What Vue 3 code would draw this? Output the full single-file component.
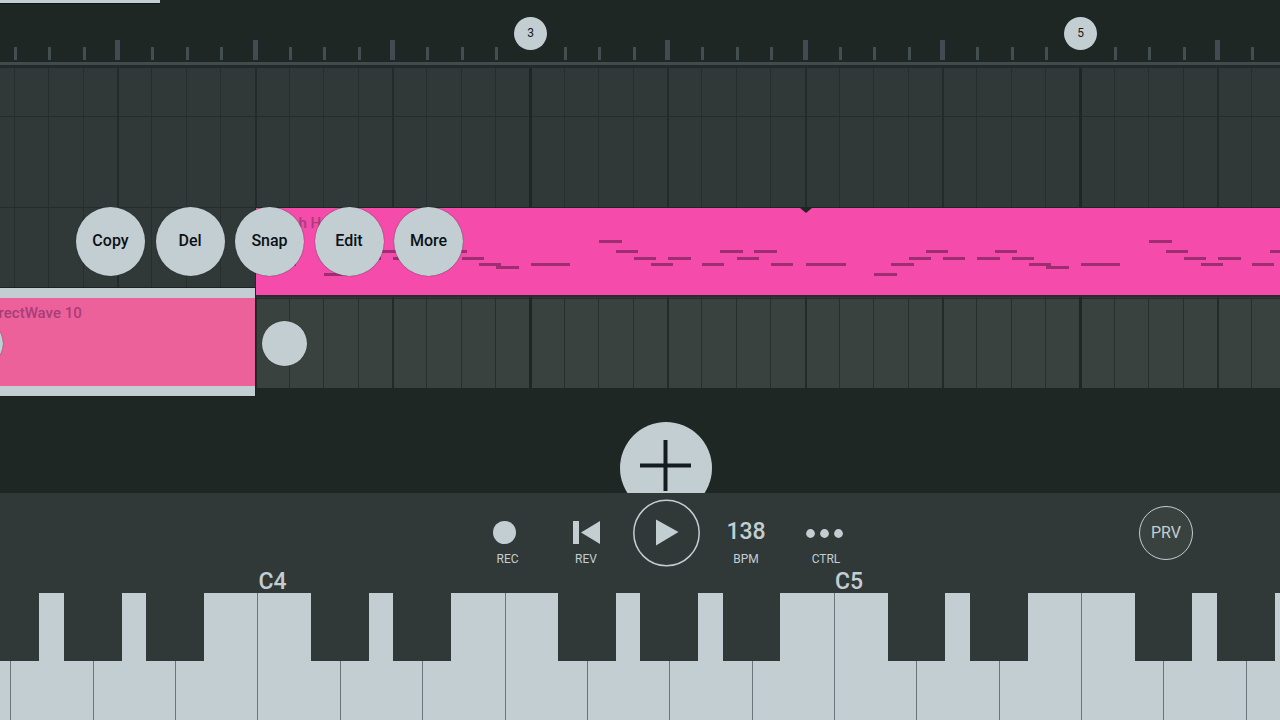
<script setup>
const STEP = 34.375
const BAR_THREE = 530

// One entry for every sixteenth step of the timeline.
const steps = Array.from({ length: 91 }, (_, i) => {
  const k = i - 16
  const x = BAR_THREE + k * STEP
  const bar = k % 16 === 0
  const beat = k % 4 === 0
  return { k, bar, beat, x: Math.floor(x), line: bar ? 3 : beat ? 2 : 1 }
})

const bars = [
  { label: '3', x: BAR_THREE },
  { label: '5', x: BAR_THREE + 16 * STEP },
]

// [half-step from the start of the clip, top, width]
const phrase = [
  [0, 55, 40],
  [4, 65, 23], [5, 55, 23], [6, 49, 22], [7, 42, 22], [8, 49, 22],
  [10, 49, 23], [11, 42, 22], [12, 49, 22], [13, 55, 22], [14, 58, 23],
  [16, 55, 39],
  [20, 32, 23], [21, 42, 22], [22, 49, 22], [23, 55, 22], [24, 49, 23],
  [26, 55, 22], [27, 42, 23], [28, 49, 22], [29, 42, 23], [30, 55, 22],
]
const notes = [0, 1, 2, 3, 4].flatMap((r) =>
  phrase.map(([s, y, w]) => ({ x: Math.floor((s + r * 32) * (STEP / 2)), y, w })),
)

const actions = ['Copy', 'Del', 'Snap', 'Edit', 'More']

const letters = ['C', 'D', 'E', 'F', 'G', 'A', 'B']
const sharpBefore = ['D', 'E', 'G', 'A', 'B']
const keys = Array.from({ length: 17 }, (_, i) => {
  const n = i + 3
  const letter = letters[n % 7]
  const name = letter + (3 + Math.floor(n / 7))
  return { name, isC: letter === 'C', sharp: sharpBefore.includes(letter) }
})
</script>

<template>
  <div class="app">
    <main class="arrangement">
      <header class="ruler">
        <div class="progress"></div>
        <svg class="ticks" width="100%" height="62" aria-hidden="true">
          <template v-for="s in steps" :key="s.k">
            <rect v-if="s.beat && !s.bar" class="tick-beat" :x="s.x - 2" y="40" width="5" height="20" />
            <rect v-else-if="!s.beat" class="tick" :x="s.x" y="47" width="3" height="13" />
          </template>
        </svg>
        <button
          v-for="b in bars"
          :key="b.label"
          class="bar-marker"
          type="button"
          :style="{ left: b.x + 'px' }"
        >{{ b.label }}</button>
      </header>

      <section class="lanes">
        <div class="lane first"></div>
        <div class="lane"></div>
        <div class="lane"></div>
        <div class="lane active"></div>

        <svg class="grid-lines" width="100%" height="100%" aria-hidden="true">
          <rect
            v-for="s in steps"
            :key="s.k"
            :class="s.bar ? 'bar-line' : s.beat ? 'beat-line' : 'step-line'"
            :x="s.x - (s.bar ? 1 : 0)"
            y="0"
            :width="s.line"
            height="100%"
          />
        </svg>

        <div class="clip horn">
          <span class="clip-name">French Horn</span>
          <svg class="notes" width="100%" height="100%" aria-hidden="true">
            <rect v-for="(n, i) in notes" :key="i" :x="n.x" :y="n.y" :width="n.w" height="3" />
            <path class="loop-mark" d="M544 0h12l-6 5z" />
          </svg>
        </div>

        <div class="clip wave">
          <span class="clip-name">DirectWave 10</span>
        </div>
        <button class="handle start" type="button" aria-label="Clip start"></button>
        <button class="handle end" type="button" aria-label="Clip end"></button>

        <div class="clip-menu">
          <button v-for="a in actions" :key="a" type="button">{{ a }}</button>
        </div>
      </section>

      <div class="add-row">
        <button class="add" type="button" aria-label="Add track">
          <svg width="92" height="92" viewBox="0 0 92 92"><path d="M20 43.5h51M45.5 18v51" /></svg>
        </button>
      </div>
    </main>

    <footer class="dock">
      <div class="controls">
        <div class="transport">
          <button type="button">
            <svg width="80" height="36" viewBox="0 0 80 36"><circle cx="38.5" cy="17.5" r="11.5" /></svg>
            <span class="caption rec-caption">REC</span>
          </button>
          <button type="button">
            <svg width="80" height="36" viewBox="0 0 80 36"><path d="M27 6h6v23h-6zM54 6v23L35 17.5z" /></svg>
            <span class="caption">REV</span>
          </button>
          <button class="play" type="button" aria-label="Play">
            <svg width="68" height="68" viewBox="0 0 68 68">
              <circle class="ring" cx="34.5" cy="34" r="32.7" />
              <path d="M24 20.5v26L46.5 33z" />
            </svg>
          </button>
          <button type="button">
            <span class="tempo">138</span>
            <span class="caption">BPM</span>
          </button>
          <button type="button">
            <svg width="80" height="36" viewBox="0 0 80 36">
              <circle cx="24.5" cy="18.5" r="4.4" />
              <circle cx="38.5" cy="18.5" r="4.4" />
              <circle cx="52.5" cy="18.5" r="4.4" />
            </svg>
            <span class="caption">CTRL</span>
          </button>
        </div>
        <button class="preview" type="button">PRV</button>
      </div>

      <div class="keyboard">
        <div v-for="k in keys" :key="k.name" class="slot">
          <span class="octave">{{ k.isC ? k.name : '' }}</span>
          <button class="white" type="button" :aria-label="k.name"></button>
          <button v-if="k.sharp" class="black" type="button" :aria-label="k.name + ' flat'"></button>
        </div>
      </div>
    </footer>
  </div>
</template>

<style>
body {
  background: #1f2725;
}
</style>

<style scoped>
.app {
  --light: #c3ced3;
  --dark: #1f2725;
  --panel: #303937;
  display: flex;
  flex-direction: column;
  height: 100vh;
  min-height: 640px;
  overflow: hidden;
  background: var(--dark);
  color: var(--light);
  font-family: Roboto, "Liberation Sans", sans-serif;
}
button {
  margin: 0;
  padding: 0;
  border: 0;
  background: none;
  color: inherit;
  font: inherit;
  cursor: pointer;
}
svg {
  display: block;
}

.arrangement {
  flex: 1;
  min-height: 0;
  overflow: hidden;
}
.ruler {
  position: relative;
  height: 62px;
  border-bottom: 3px solid #414b4d;
  box-shadow: 0 3px 0 #212b2a;
  margin-bottom: 3px;
}
.progress {
  position: absolute;
  top: 0;
  left: 0;
  width: 12.5%;
  height: 3px;
  background: var(--light);
  box-shadow: 0 1px 0 #0d1518;
}
.tick {
  fill: #434e50;
}
.tick-beat {
  fill: #424b51;
}
.bar-marker {
  position: absolute;
  top: 17px;
  width: 33px;
  height: 33px;
  margin-left: -16px;
  padding-bottom: 2px;
  border-radius: 50%;
  background: var(--light);
  color: #141c1e;
  font-size: 12px;
}

.lanes {
  position: relative;
  z-index: 1;
}
.lane {
  height: 90px;
  border-bottom: 1px solid #242d2c;
  background: #303938;
}
.lane.first {
  height: 48px;
}
.lane.active {
  height: 89px;
  border: 0;
  background: #39423f;
}
.grid-lines {
  position: absolute;
  inset: 0;
}
.step-line {
  fill: #262f2e;
}
.beat-line {
  fill: #222b2a;
}
.bar-line {
  fill: #1e2726;
}

.clip {
  position: absolute;
  overflow: hidden;
}
.clip-name {
  position: absolute;
  left: 5px;
  top: 5px;
  color: #a83d7a;
  font-size: 15px;
  font-weight: 500;
  line-height: 20px;
  white-space: nowrap;
}
.horn {
  top: 140px;
  left: 256px;
  right: 0;
  height: 87px;
  background: #f54bab;
  box-shadow: 0 -1px 0 #1d2625, 0 2px 0 #2a2b30;
}
.notes {
  position: absolute;
  inset: 0;
  fill: #9f2d72;
}
.loop-mark {
  fill: #1f2725;
}
.wave {
  top: 220px;
  left: -20px;
  width: 275px;
  height: 88px;
  border: solid var(--light);
  border-width: 10px 0;
  background: #ec6199;
  box-shadow: 0 0 0 1px #1b2423;
}

.handle {
  position: absolute;
  top: 253px;
  width: 45px;
  height: 45px;
  border-radius: 50%;
  background: var(--light);
  box-shadow: 0 0 1px #1f2725;
}
.handle.start {
  left: -42px;
}
.handle.end {
  left: 262px;
}
.clip-menu {
  position: absolute;
  top: 139px;
  left: 76px;
  display: flex;
  justify-content: space-between;
  width: 387px;
}
.clip-menu button {
  width: 69px;
  height: 69px;
  padding-bottom: 2px;
  border-radius: 50%;
  background: var(--light);
  box-shadow: 0 0 1px #1f2725;
  color: #0b1113;
  font-size: 16px;
  font-weight: 500;
}

.add-row {
  display: flex;
  justify-content: center;
  padding: 34px 0 0 52px;
}
.add {
  width: 92px;
  height: 92px;
  border-radius: 50%;
  background: var(--light);
}
.add path {
  fill: none;
  stroke: #141c20;
  stroke-width: 4;
}

.dock {
  flex: none;
  overflow: hidden;
  background: var(--panel);
}
.controls {
  display: grid;
  grid-template-columns: 1fr 400px 1fr;
  align-items: start;
  height: 76px;
  padding: 0 0 0 52px;
}
.transport {
  grid-column: 2;
  display: grid;
  grid-template-columns: repeat(5, 80px);
  padding-top: 6px;
}
.transport button {
  display: flex;
  flex-direction: column;
  align-items: center;
  padding-top: 16px;
}
.transport .play {
  padding-top: 0;
}
.transport svg {
  fill: var(--light);
}
.transport .ring {
  fill: none;
  stroke: var(--light);
  stroke-width: 1.5;
}
.caption {
  font-size: 12px;
  line-height: 16px;
}
.rec-caption {
  padding-left: 3px;
}
.tempo {
  height: 36px;
  font-size: 23px;
  font-weight: 500;
  line-height: 34px;
}
.preview {
  grid-column: 3;
  justify-self: end;
  width: 54px;
  height: 54px;
  margin: 13px 87px 0 0;
  padding-bottom: 2px;
  border: 1px solid var(--light);
  border-radius: 50%;
  background: #39423f;
  font-size: 16px;
}

.keyboard {
  display: flex;
  margin-left: -72px;
  margin-right: -48px;
}
.slot {
  position: relative;
  flex: 1;
  min-width: 0;
}
.octave {
  display: block;
  height: 24px;
  padding-left: 1px;
  font-size: 23px;
  font-weight: 500;
  line-height: 25px;
}
.white {
  display: block;
  width: 100%;
  height: 127px;
  border-left: 1px solid #6a767b;
  background: var(--light);
}
.black {
  position: absolute;
  top: 24px;
  left: -35%;
  z-index: 1;
  width: 70%;
  height: 68px;
  background: var(--panel);
}
</style>
